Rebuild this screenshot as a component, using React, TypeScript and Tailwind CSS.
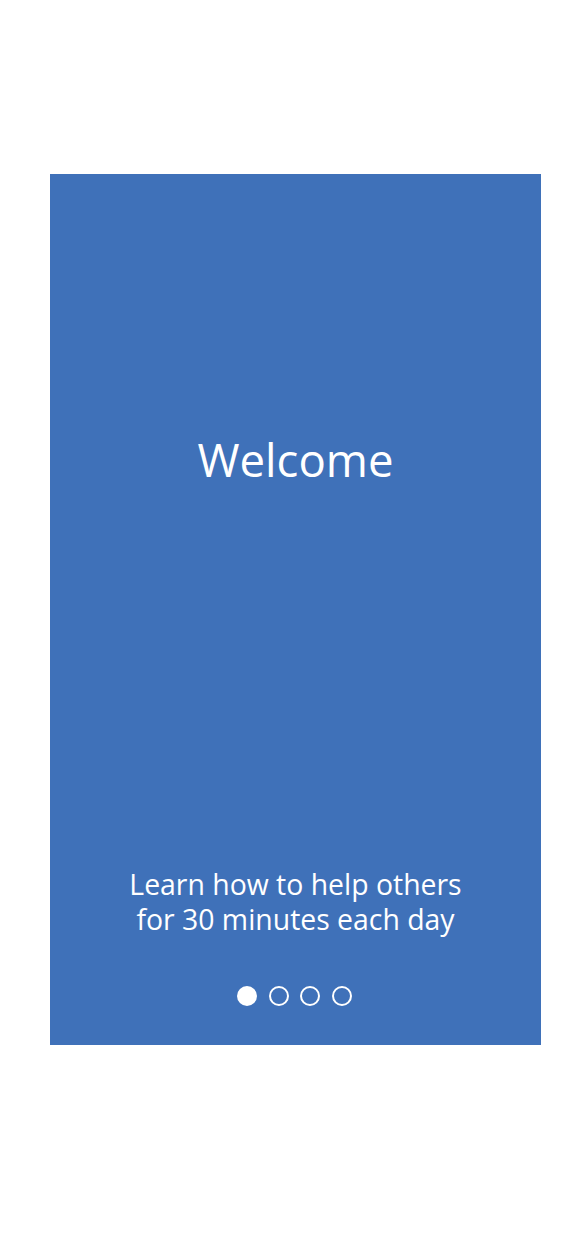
export default function App() {
  const dots = [true, false, false, false];
  return (
    <div className="min-h-[1235px] bg-white pt-[174px] font-['Open_Sans',sans-serif]">
      <div className="ml-[50px] flex h-[871px] w-[491px] flex-col items-center bg-[#3f71b9] text-white">
        <h1 className="pt-[255px] text-[45.5px] leading-[60px] font-normal">Welcome</h1>
        <div className="flex-1" />
        <p className="text-center text-[28.4px] leading-[35px]">
          Learn how to help others
          <br />
          for 30 minutes each day
        </p>
        <div className="mt-[49px] mb-[39px] mr-[2px] flex gap-[11.5px]">
          {dots.map((active, i) => (
            <span
              key={i}
              className={
                active
                  ? "h-[20px] w-[20px] rounded-full bg-white"
                  : "h-[20px] w-[20px] rounded-full border-2 border-white"
              }
            />
          ))}
        </div>
      </div>
    </div>
  );
}
